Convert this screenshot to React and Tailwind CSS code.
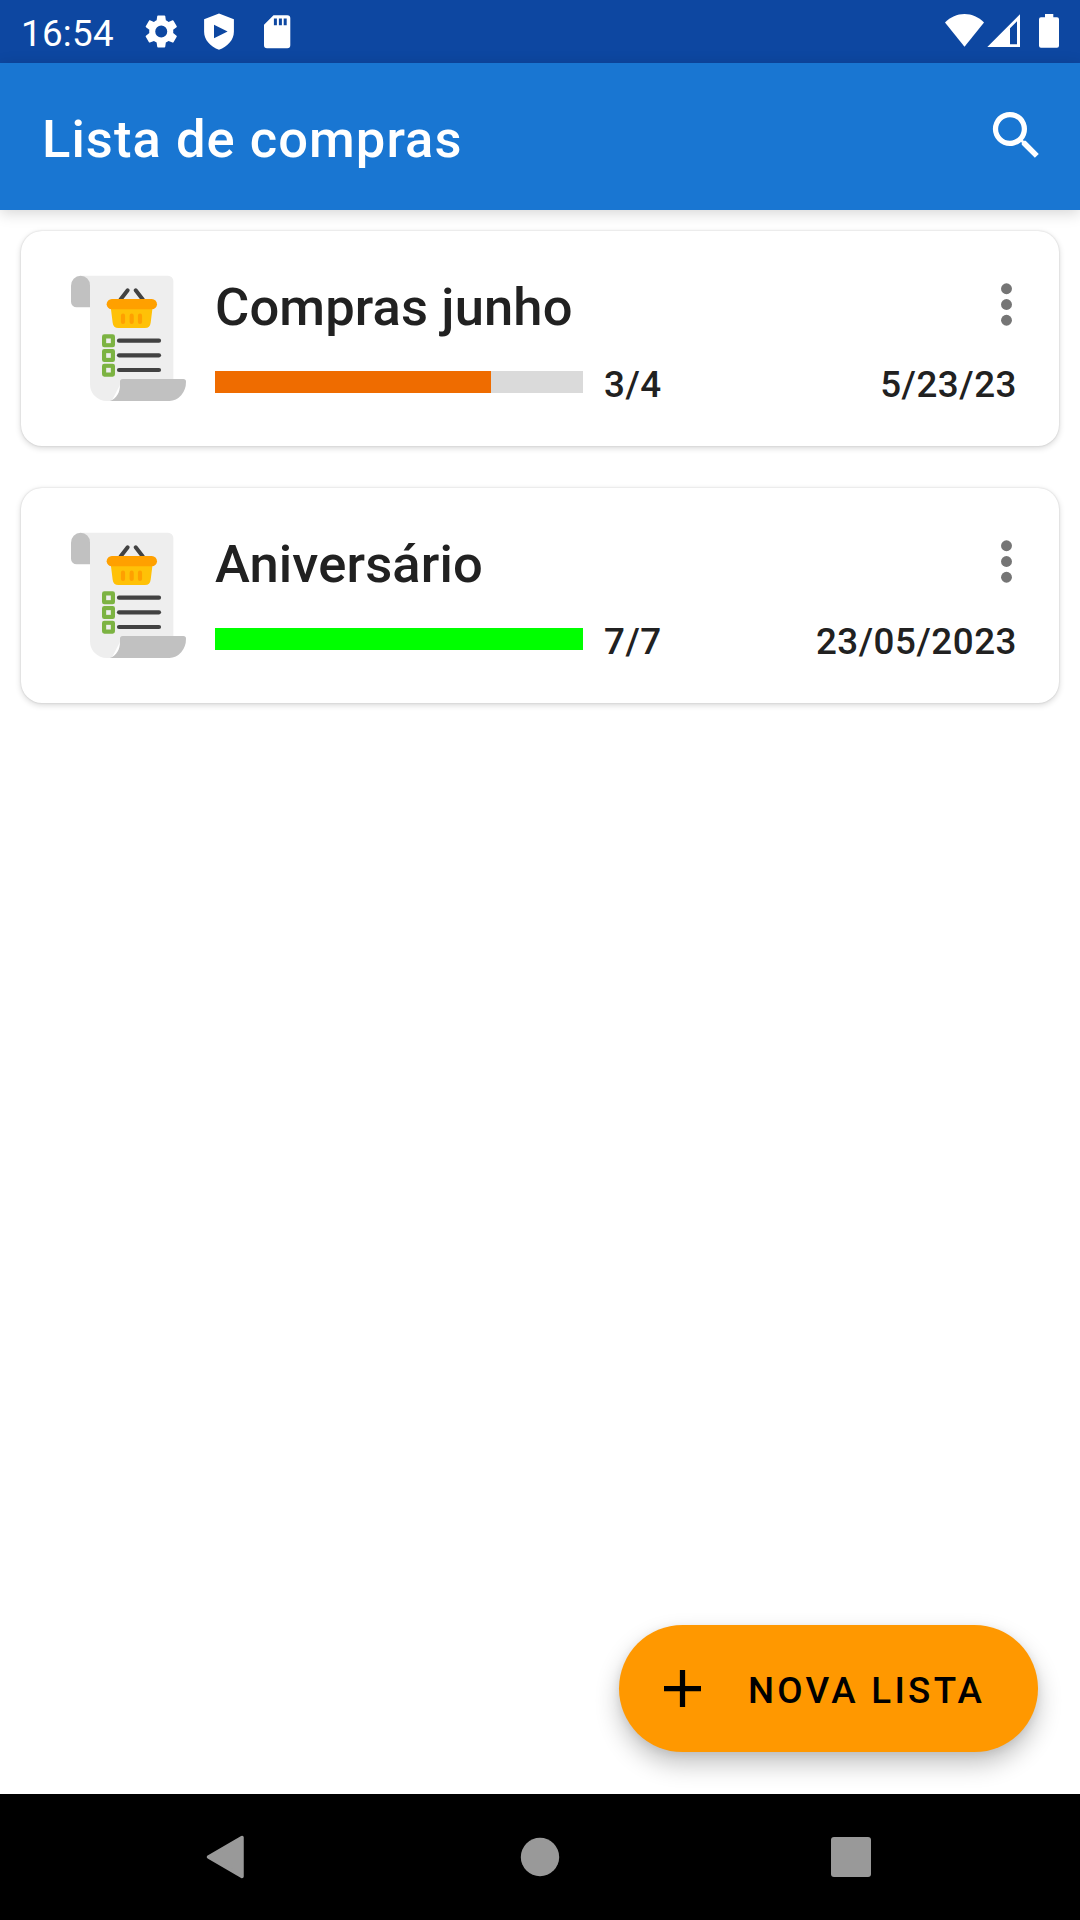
const lists = [
  { name: 'Compras junho', done: 3, total: 4, date: '5/23/23', color: '#ef6c00' },
  { name: 'Aniversário', done: 7, total: 7, date: '23/05/2023', color: '#00ff00' },
];

function StatusBar() {
  return (
    <div className="flex h-[63px] shrink-0 bg-[#0d47a1] text-white">
      <span className="ml-[21px] mt-3 w-[121px] text-[36.75px] leading-[44px] tracking-[0.007em]">16:54</span>
      <svg className="h-[63px] w-[160px]" viewBox="142 0 160 63" fill="currentColor">
        <g transform="translate(141.2 11.4) scale(1.67)">
          <path fillRule="evenodd" d="M19.14 12.94c.04-.3.06-.61.06-.94 0-.32-.02-.64-.07-.94l2.03-1.58a.49.49 0 0 0 .12-.61l-1.92-3.32a.49.49 0 0 0-.59-.22l-2.39.96c-.5-.38-1.03-.7-1.62-.94l-.36-2.54a.48.48 0 0 0-.48-.41h-3.84c-.24 0-.43.17-.47.41l-.36 2.54c-.59.24-1.13.57-1.62.94l-2.39-.96c-.22-.08-.47 0-.59.22L2.74 8.87c-.12.21-.08.47.12.61l2.03 1.58c-.05.3-.09.63-.09.94s.02.64.07.94l-2.03 1.58a.49.49 0 0 0-.12.61l1.92 3.32c.12.22.37.29.59.22l2.39-.96c.5.38 1.03.7 1.62.94l.36 2.54c.05.24.24.41.48.41h3.84c.24 0 .44-.17.47-.41l.36-2.54c.59-.24 1.13-.56 1.62-.94l2.39.96c.22.08.47 0 .59-.22l1.92-3.32a.49.49 0 0 0-.12-.61zM12 15.6A3.6 3.6 0 1 1 12 8.4a3.6 3.6 0 0 1 0 7.2z" />
        </g>
        <path fillRule="evenodd" d="M219 13.6l14.9 5.6v12.6c0 8-6.2 14.9-14.9 18-8.7-3.1-14.9-10-14.9-18V19.2zM214 24.8v13.5L227.6 31.5z" />
        <path fillRule="evenodd" d="M273.5 15.3h13.8a3 3 0 0 1 3 3v27a3 3 0 0 1-3 3h-20.3a3 3 0 0 1-3-3V24.7zM273.9 18.5v6.8h3v-6.8zM278.9 18.5v6.8h3v-6.8zM283.7 18.5v6.8h3v-6.8z" />
      </svg>
      <svg className="ml-auto mr-5 h-[63px] w-[116px]" viewBox="944 0 116 63" fill="currentColor">
        <path d="M945 22.5C950.5 17 957 14 964.5 14S978.5 17 984 22.5L964.5 46.8z" />
        <path fillRule="evenodd" d="M1020 14.3V47h-32.7zM1010 28.3V44.2h7V21.3z" />
        <path d="M1045 14h8.3v3.3h3.7a2 2 0 0 1 2 2v26.5a2 2 0 0 1-2 2h-16a2 2 0 0 1-2-2V19.3a2 2 0 0 1 2-2h4z" />
      </svg>
    </div>
  );
}

function AppBar() {
  return (
    <header className="flex h-[147px] shrink-0 items-start justify-between bg-[#1976d2] pl-[42px] pr-8 text-white shadow-[0_3px_14px_rgba(0,0,0,0.17)]">
      <h1 className="mt-[46px] text-[52.5px] font-medium leading-[60px] tracking-[0.02em]">Lista de compras</h1>
      <svg className="mt-[41px] size-[63px]" viewBox="0 0 24 24" fill="currentColor">
        <path d="M15.5 14h-.79l-.28-.27A6.47 6.47 0 0 0 16 9.5 6.5 6.5 0 1 0 9.5 16c1.61 0 3.09-.59 4.23-1.57l.27.28v.79l5 4.99L20.49 19l-4.99-5zm-6 0C7.01 14 5 11.99 5 9.5S7.01 5 9.5 5 14 7.01 14 9.5 11.99 14 9.5 14z" />
      </svg>
    </header>
  );
}

function ScrollIcon() {
  return (
    <svg className="size-[150px] shrink-0" viewBox="0 0 450 450">
      <path d="M94 47H354a16 16 0 0 1 16 16V365H215L185 423H170a50 50 0 0 1-50-50V75z" fill="#eeeeee" />
      <path d="M92 47a29 29 0 0 1 28 29V142H80a17 17 0 0 1-17-17V78A30 30 0 0 1 92 47z" fill="#c1c1c1" />
      <path d="M218 357H400a8 8 0 0 1 8 8A50 57 0 0 1 358 423H180C200 416 210 397 210 375V365a8 8 0 0 1 8-8z" fill="#c1c1c1" />
      <path d="M211 119L233 91M279 119L257 91" stroke="#424242" strokeWidth="12" strokeLinecap="round" />
      <path d="M182 140H308L302 188A18 18 0 0 1 285 204H205A18 18 0 0 1 188 188z" fill="#ffc107" />
      <rect x="170" y="117" width="151" height="31" rx="15.5" fill="#ffa000" />
      <path d="M219 167V186M245 167V186M270 167V186" stroke="#ffa000" strokeWidth="12.5" strokeLinecap="round" />
      {[242, 286, 330].map((y) => (
        <g key={y}>
          <rect x="162" y={y - 13} width="27" height="27" rx="1" fill="#7cb342" stroke="#7cb342" strokeWidth="12" strokeLinejoin="round" />
          <rect x="168.5" y={y - 6.5} width="14" height="14" fill="#eeeeee" />
          <path d={`M207 ${y}H327`} stroke="#424242" strokeWidth="12.5" strokeLinecap="round" />
        </g>
      ))}
    </svg>
  );
}

function ListCard({ name, done, total, date, color }) {
  return (
    <article className="flex h-[215px] gap-[15px] rounded-[21px] bg-white pl-[29px] pr-[21px] pt-[29px] shadow-[0_2px_6px_rgba(0,0,0,0.16),0_0_2px_rgba(0,0,0,0.16)]">
      <ScrollIcon />
      <div className="flex-1 pt-[17px] text-[#212121]">
        <div className="flex h-[60px] items-center justify-between">
          <h2 className="text-[52.5px] font-medium leading-[60px] tracking-[0.0025em]">{name}</h2>
          <svg className="-mt-[5px] size-[63px]" viewBox="0 0 24 24" fill="#757575">
            <circle cx="12" cy="6" r="2.08" />
            <circle cx="12" cy="12" r="2.08" />
            <circle cx="12" cy="18" r="2.08" />
          </svg>
        </div>
        <div className="mt-[26px] flex items-start text-[36.75px] font-medium leading-[44px] tracking-[0.0145em]">
          <div className="mt-2 h-[22px] w-[368px] bg-[#dadada]">
            <div className="h-full" style={{ width: `${(done / total) * 100}%`, backgroundColor: color }} />
          </div>
          <span className="ml-[21px]">{done}/{total}</span>
          <span className="ml-auto mr-[21px]">{date}</span>
        </div>
      </div>
    </article>
  );
}

function NavBar() {
  return (
    <nav className="h-[126px] shrink-0 bg-black">
      <svg className="h-full w-full" viewBox="0 1794 1080 126" fill="#999999">
        <path d="M208.5 1857L242 1837.5V1876.5z" stroke="#999999" strokeWidth="3.5" strokeLinejoin="round" />
        <circle cx="540" cy="1857" r="19.2" />
        <rect x="831" y="1837" width="40" height="40" rx="3" />
      </svg>
    </nav>
  );
}

export default function App() {
  return (
    <div className="flex h-[1920px] w-[1080px] flex-col overflow-hidden bg-white font-['Roboto',sans-serif]">
      <StatusBar />
      <AppBar />
      <main className="flex flex-1 flex-col gap-[42px] px-[21px] pb-[42px] pt-[21px]">
        {lists.map((list) => (
          <ListCard key={list.name} {...list} />
        ))}
        <button className="mr-[21px] mt-auto flex h-[127px] w-[419px] items-center self-end rounded-full bg-[#ff9800] pl-8 text-black shadow-[0_12px_24px_rgba(0,0,0,0.24),0_2px_8px_rgba(0,0,0,0.08)]">
          <svg className="size-[63px] shrink-0" viewBox="0 0 63 63" stroke="currentColor" strokeWidth="5.25">
            <path d="M13 31.5H50M31.5 13V50" />
          </svg>
          <span className="ml-[34px] mt-[5px] whitespace-nowrap text-[36.75px] font-medium leading-[44px] tracking-[0.0893em]">NOVA LISTA</span>
        </button>
      </main>
      <NavBar />
    </div>
  );
}
